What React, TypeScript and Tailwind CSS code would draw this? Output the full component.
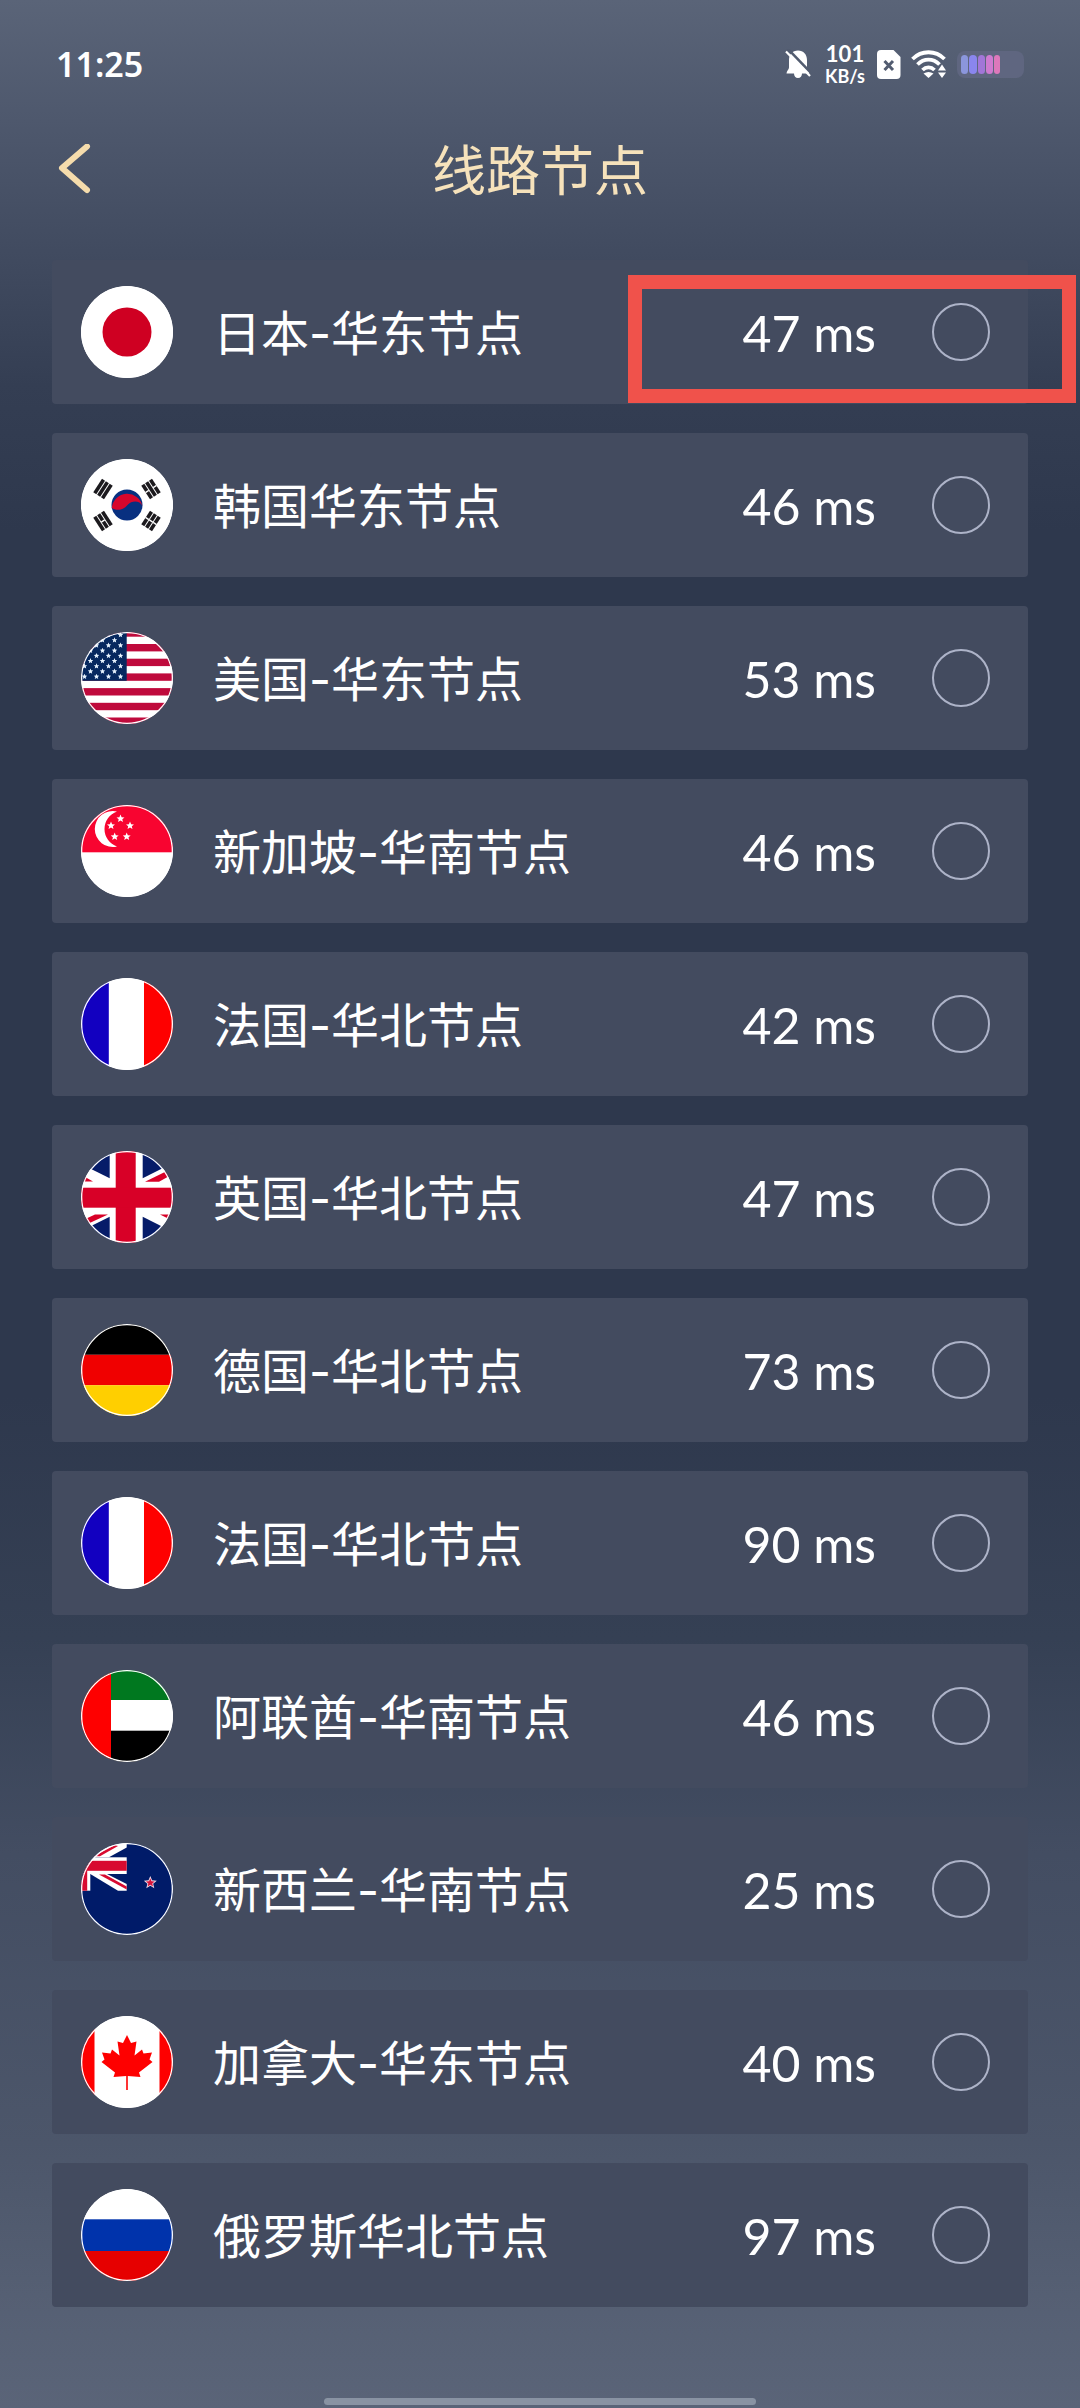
import type { ReactNode } from "react";

interface NodeItem {
  flag: string;
  name: string;
  ping: number;
  marked?: boolean;
}

const nodes: NodeItem[] = [
  { flag: "jp", name: "日本-华东节点", ping: 47, marked: true },
  { flag: "kr", name: "韩国华东节点", ping: 46 },
  { flag: "us", name: "美国-华东节点", ping: 53 },
  { flag: "sg", name: "新加坡-华南节点", ping: 46 },
  { flag: "fr", name: "法国-华北节点", ping: 42 },
  { flag: "gb", name: "英国-华北节点", ping: 47 },
  { flag: "de", name: "德国-华北节点", ping: 73 },
  { flag: "fr", name: "法国-华北节点", ping: 90 },
  { flag: "ae", name: "阿联酋-华南节点", ping: 46 },
  { flag: "nz", name: "新西兰-华南节点", ping: 25 },
  { flag: "ca", name: "加拿大-华东节点", ping: 40 },
  { flag: "ru", name: "俄罗斯华北节点", ping: 97 },
];

function star(cx: number, cy: number, r: number) {
  const points: string[] = [];
  for (let i = 0; i < 10; i++) {
    const radius = i % 2 === 0 ? r : r * 0.45;
    const angle = (Math.PI / 5) * i - Math.PI / 2;
    points.push(`${cx + radius * Math.cos(angle)},${cy + radius * Math.sin(angle)}`);
  }
  return points.join(" ");
}

// Three bars, solid or broken
function Trigram({ x, y, angle, broken }: { x: number; y: number; angle: number; broken: boolean[] }) {
  return (
    <g transform={`translate(${x} ${y}) rotate(${angle})`} fill="#1c1a1e">
      {broken.map((isBroken, i) => (
        <g key={i}>
          <rect x={-8} y={-6.4 + i * 4.6} width={16} height={3.6} />
          {isBroken && <rect x={-0.7} y={-6.6 + i * 4.6} width={1.4} height={4} fill="#fff" />}
        </g>
      ))}
    </g>
  );
}

const usStars: [number, number][] = [];
for (let col = 0; col < 7; col++) {
  for (let row = 0; row < 9; row++) {
    if ((col + row) % 2 === 0) usStars.push([39.5 - col * 6, 3 + row * 5.2]);
  }
}

const flags: Record<string, ReactNode> = {
  jp: <circle cx="46" cy="46" r="24.5" fill="#cf0022" />,
  kr: (
    <>
      <circle cx="46" cy="46" r="15.5" fill="#083080" />
      <path
        d="M30.8 49A15.5 15.5 0 0 1 61.4 47C59 41.5 51 41 46.5 46C42 51.5 35 52 30.8 49Z"
        fill="#d8062c"
      />
      <Trigram x={22} y={30} angle={-57} broken={[false, false, false]} />
      <Trigram x={70} y={30} angle={57} broken={[true, false, true]} />
      <Trigram x={22} y={62} angle={57} broken={[false, true, false]} />
      <Trigram x={70} y={62} angle={-57} broken={[true, true, true]} />
    </>
  ),
  us: (
    <>
      {[-2.7, 12, 26.7, 41.4, 56.1, 70.8, 85.5].map((y) => (
        <rect key={y} y={y} width="92" height="7.4" fill="#bf0a3c" />
      ))}
      <rect width="45.7" height="48.8" fill="#06285f" />
      {usStars.map(([x, y]) => (
        <polygon key={`${x}-${y}`} points={star(x, y, 2.9)} fill="#e6f2fd" />
      ))}
    </>
  ),
  sg: (
    <>
      <rect width="92" height="47.3" fill="#f80430" />
      <path d="M36 6.5A18 18 0 1 0 36 41.5A18.5 18.5 0 0 1 36 6.5Z" fill="#fff" />
      <polygon points={star(39.5, 13.7, 4.2)} fill="#fff" />
      <polygon points={star(30, 20.7, 4.2)} fill="#fff" />
      <polygon points={star(49, 20.7, 4.2)} fill="#fff" />
      <polygon points={star(33.7, 31.7, 4.2)} fill="#fff" />
      <polygon points={star(45.7, 31.7, 4.2)} fill="#fff" />
    </>
  ),
  fr: (
    <>
      <rect width="27.8" height="92" fill="#1200c0" />
      <rect x="63" width="29" height="92" fill="#fe0000" />
    </>
  ),
  gb: (
    <>
      <g fill="#061c69">
        <path d="M28.7 0V27.3L0 13V0Z" />
        <path d="M61.7 0V27.3L92 12V0Z" />
        <path d="M28.7 92V65.7L0 80V92Z" />
        <path d="M61.7 92V65.7L92 81V92Z" />
      </g>
      <g fill="#d80027">
        <rect x="34.7" width="20" height="92" />
        <rect y="36.7" width="92" height="20" />
        <path d="M64 30.7H78L92 23V17Z" />
        <path d="M0 25L5 26.5L12 30.5H0Z" />
        <path d="M27 63.5H14L0 70V76Z" />
        <path d="M79 63.5H92V70L86 67Z" />
      </g>
    </>
  ),
  de: (
    <>
      <rect width="92" height="30.8" fill="#000" />
      <rect y="30.8" width="92" height="30.4" fill="#f00000" />
      <rect y="61.2" width="92" height="30.8" fill="#ffcf00" />
    </>
  ),
  ae: (
    <>
      <rect width="92" height="30" fill="#00781f" />
      <rect y="60.7" width="92" height="31.3" fill="#000" />
      <rect width="30" height="92" fill="#fe0000" />
    </>
  ),
  nz: (
    <>
      <rect width="92" height="92" fill="#001b69" />
      <path d="M0 0H45.7V4.5L28 14.3H0Z" fill="#fff" />
      <rect y="14.3" width="45.7" height="16.7" fill="#fff" />
      <rect width="9.3" height="47.7" fill="#fff" />
      <path d="M9.3 31H26L45.7 41V47.7H37Z" fill="#fff" />
      <g fill="#d80a30">
        <rect y="17.8" width="45.7" height="10" />
        <rect width="6.2" height="47.7" />
        <path d="M13 13.3L34 2L37 3L19 13.3Z" />
        <path d="M18 31.5H24L45.7 43.5V46.5Z" />
      </g>
      <polygon points={star(69.3, 39.8, 6.8)} fill="#f1dbe8" />
      <polygon points={star(69.3, 39.8, 4.6)} fill="#d8143c" />
    </>
  ),
  ca: (
    <>
      <rect width="13.5" height="92" fill="#fe0000" />
      <rect x="78.5" width="13.5" height="92" fill="#fe0000" />
      <path
        d="M46 19L42 27L36.5 25.5L38.5 39.5L31 33.5L29.5 37.5L21 36.5L23.5 43.5L20.5 46L34 56.5L32.5 61L45.2 60V74H46.8V60L59.5 61L58 56.5L71.5 46L68.5 43.5L71 36.5L62.5 37.5L61 33.5L53.5 39.5L55.5 25.5L50 27Z"
        fill="#fe0000"
      />
    </>
  ),
  ru: (
    <>
      <rect y="30.3" width="92" height="31.7" fill="#0033ab" />
      <rect y="62" width="92" height="30" fill="#e60000" />
    </>
  ),
};

function Flag({ code }: { code: string }) {
  return (
    <svg viewBox="0 0 92 92" className="size-23 shrink-0 rounded-full bg-white" aria-hidden="true">
      {flags[code]}
      <circle cx="46" cy="46" r="45.4" fill="none" stroke="#fff" strokeWidth="1.4" />
    </svg>
  );
}

function StatusBar() {
  return (
    <div className="flex h-32 items-center justify-between px-14 text-white">
      <time className="font-['Noto_Sans',sans-serif] text-[34px] leading-10 font-semibold">11:25</time>
      <div className="flex items-center">
        <svg viewBox="0 0 26 30" className="h-[30px] w-[26px]" aria-hidden="true">
          <path
            d="M13 1.5C18.5 1.5 22 5.5 22 11V18.5C22 20.5 24.5 22 24.5 24.5H17C17 27 15.5 29 13 29S9 27 9 24.5H1.5C1.5 22 4 20.5 4 18.5V11C4 5.5 7.5 1.5 13 1.5Z"
            fill="#fff"
          />
          <path d="M2 -1L28 26" stroke="#525c70" strokeWidth="2.5" />
          <path d="M1 2.5L25 27" stroke="#fff" strokeWidth="2.2" />
        </svg>
        <div className="ml-3.5 flex w-10 flex-col items-center font-['Lato',sans-serif] font-bold">
          <span className="text-[22px] leading-6">101</span>
          <span className="text-[18px] leading-5">KB/s</span>
        </div>
        <svg viewBox="0 0 24 29" className="ml-3 h-[29px] w-6" aria-hidden="true">
          <path d="M4 0H16.5L23.5 7V25A4 4 0 0 1 19.5 29H4A4 4 0 0 1 0 25V4A4 4 0 0 1 4 0Z" fill="#fff" />
          <path d="M7.5 11L16 20M16 11L7.5 20" stroke="#525c70" strokeWidth="3" />
        </svg>
        <svg viewBox="0 0 36 28" className="ml-2.5 h-7 w-9" aria-hidden="true">
          <g fill="none" stroke="#fff" strokeWidth="3.8">
            <path d="M1.5 9C10.5 0 24.5 0 33.5 9" />
            <path d="M6.5 14.5C13 8 22 8 28.5 14.5" />
            <path d="M11.5 20C15 16.5 20 16.5 23.5 20" />
          </g>
          <path d="M12.5 23.5Q17.5 20.5 22.5 23.5L17.5 28Z" fill="#fff" />
          <path d="M27 20.5L31 14.5L35 20.5ZM27 22.5L31 28L35 22.5Z" fill="#fff" />
        </svg>
        <div className="ml-2.5 flex h-[27px] w-[67px] items-center gap-px rounded-lg bg-[#5f6680] pl-1">
          <span className="h-[19px] w-[7px] rounded-sm bg-[#8b96dc]" />
          <span className="h-[19px] w-2 rounded-sm bg-[#8a86ee]" />
          <span className="h-[19px] w-[7px] rounded-sm bg-[#a276d8]" />
          <span className="h-[19px] w-[7px] rounded-sm bg-[#cf7bd0]" />
          <span className="h-[19px] w-1.5 rounded-sm bg-[#dd78bb]" />
        </div>
      </div>
    </div>
  );
}

function NodeRow({ flag, name, ping, marked }: NodeItem) {
  return (
    <li className="relative">
      <label className="flex h-36 items-center rounded-sm bg-[#434b5f] pr-[38px] pl-[29px] text-white">
        <Flag code={flag} />
        <span className="ml-10 flex-1 pt-1 text-[48px] leading-[72px]">{name}</span>
        <span className="pt-0.5 font-['Lato',sans-serif] text-[50px] leading-[72px]">{ping} ms</span>
        <input
          type="radio"
          name="node"
          className="ml-14 size-[58px] shrink-0 appearance-none rounded-full border-2 border-[#adb3c8] checked:bg-[#f3dcae]"
        />
      </label>
      {marked && (
        <div className="pointer-events-none absolute top-[15px] -right-12 h-32 w-[448px] border-[14px] border-[#f0524b]" />
      )}
    </li>
  );
}

export default function App() {
  return (
    <div className="min-h-screen bg-[linear-gradient(to_bottom,#5a6478_0%,#4e586d_5%,#424c61_10%,#343e53_16%,#2e384d_22%,#2e384d_58%,#354054_68%,#434d62_77%,#4c566a_89%,#566074_96%,#5a6478_100%)] font-['Inter','Noto_Sans_CJK_SC',sans-serif]">
      <StatusBar />
      <header className="grid h-[88px] grid-cols-[1fr_auto_1fr] items-center px-14">
        <button type="button" aria-label="返回" className="justify-self-start">
          <svg viewBox="0 0 36 56" className="h-14 w-9" aria-hidden="true">
            <path
              d="M31 2.5L6 24L31 46"
              fill="none"
              stroke="#f5dcac"
              strokeWidth="6"
              strokeLinecap="round"
              strokeLinejoin="round"
            />
          </svg>
        </button>
        <h1 className="text-[54px] leading-[80px] text-[#f6e2bb]">线路节点</h1>
      </header>
      <main className="px-13 pt-11">
        <ul className="flex flex-col gap-[29px]">
          {nodes.map((node, i) => (
            <NodeRow key={i} {...node} />
          ))}
        </ul>
      </main>
      <footer className="flex justify-center pt-[91px] pb-[3px]">
        <div className="h-[7px] w-2/5 rounded-full bg-[#8993a3]" />
      </footer>
    </div>
  );
}
